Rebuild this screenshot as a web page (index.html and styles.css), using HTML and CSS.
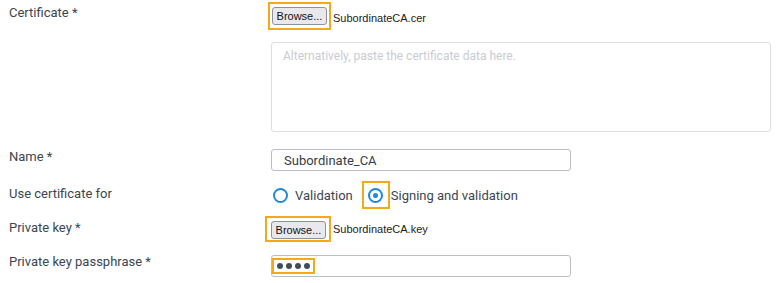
FILE: index.html
```html
<!DOCTYPE html>
<html>
  <head>
    <meta charset="UTF-8" />
    <title>Add certificate</title>
    <link rel="stylesheet" href="styles.css">
  </head>
  <body>
    <div class="form">
      <!-- Certificate upload -->
      <div class="row row-cert">
        <div class="label">Certificate *</div>
        <div class="control">
          <div class="file">
            <span class="hl hl-first"><span class="browse">Browse...</span></span>
            <span class="file-name">SubordinateCA.cer</span>
          </div>
          <div class="textarea">Alternatively, paste the certificate data here.</div>
        </div>
      </div>

      <div class="row row-name">
        <div class="label">Name *</div>
        <div class="control">
          <div class="input">Subordinate_CA</div>
        </div>
      </div>

      <div class="row row-use">
        <div class="label">Use certificate for</div>
        <div class="control radios">
          <span class="radio"></span>
          <span class="radio-text">Validation</span>
          <span class="hl hl-radio"><span class="radio checked"></span></span>
          <span class="radio-text">Signing and validation</span>
        </div>
      </div>

      <div class="row row-key">
        <div class="label">Private key *</div>
        <div class="control">
          <div class="file">
            <span class="hl hl-second"><span class="browse">Browse...</span></span>
            <span class="file-name">SubordinateCA.key</span>
          </div>
        </div>
      </div>

      <div class="row row-pass">
        <div class="label">Private key passphrase *</div>
        <div class="control">
          <div class="input">
            <span class="hl hl-mask">
              <span class="dot"></span><span class="dot"></span><span class="dot"></span><span class="dot"></span>
            </span>
          </div>
        </div>
      </div>
    </div>
  </body>
</html>
```

FILE: styles.css
```css
body {
  margin: 0;
  padding: 0;
  background-color: #fff;
  font-family: Roboto, 'Noto Sans', sans-serif;
  font-size: 13px;
  color: #3b4651;
}

.form {
  display: flex;
  flex-direction: column;
}

.row {
  display: flex;
  align-items: flex-start;
}

.label {
  width: 271px;
  flex-shrink: 0;
  box-sizing: border-box;
  padding-left: 9px;
  line-height: 16px;
}

.control {
  display: flex;
  flex-direction: column;
}

/* Certificate */
.row-cert {
  padding-top: 5px;
}

.file {
  display: flex;
  align-items: center;
}

.browse {
  display: block;
  box-sizing: border-box;
  width: 55px;
  height: 18px;
  line-height: 16px;
  text-align: center;
  font-family: 'Liberation Sans', Arial, sans-serif;
  font-size: 11px;
  color: #111;
  background-color: #e9e9ed;
  border: 1px solid #8f8f9d;
  border-radius: 3px;
}

.file-name {
  margin-left: 2px;
  font-family: 'Liberation Sans', Arial, sans-serif;
  font-size: 11px;
  color: #222;
}

/* Orange highlight marks */
.hl {
  display: inline-flex;
  align-items: center;
  border: 2px solid #f4a81c;
}

.hl-first {
  margin-top: -3px;
  margin-left: -3px;
  padding: 3px 2px;
}

.hl-second {
  margin-left: -6px;
  padding: 3px 3px 1px 4px;
}

.textarea {
  box-sizing: border-box;
  margin-top: 12px;
  width: 500px;
  height: 90px;
  padding: 5px 11px;
  border: 1px solid #dcdfe2;
  border-radius: 3px;
  font-size: 12px;
  line-height: 16px;
  color: #c9cdd1;
}

/* Text inputs */
.row-name {
  margin-top: 17px;
}

.input {
  box-sizing: border-box;
  width: 300px;
  height: 22px;
  padding: 0 12px;
  display: flex;
  align-items: center;
  border: 1px solid #b9bec4;
  border-radius: 3px;
  color: #343e48;
}

/* Radios */
.row-use {
  margin-top: 10px;
}

.row-use .label {
  padding-top: 5px;
}

.radios {
  flex-direction: row;
  align-items: center;
  height: 28px;
}

.radio {
  display: block;
  box-sizing: border-box;
  width: 15px;
  height: 15px;
  margin-left: 2px;
  border: 2px solid #1d8ad5;
  border-radius: 50%;
}

.radio.checked {
  margin-left: 0;
  display: flex;
  align-items: center;
  justify-content: center;
}

.radio.checked::after {
  content: '';
  width: 5px;
  height: 5px;
  border-radius: 50%;
  background-color: #1d8ad5;
}

.radio-text {
  margin-left: 7px;
}

.hl-radio {
  box-sizing: border-box;
  width: 28px;
  height: 28px;
  justify-content: center;
  margin-left: 9px;
}

.hl-radio + .radio-text {
  margin-left: 1px;
}

/* Private key */
.row-key {
  margin-top: 7px;
}

.row-key .label {
  padding-top: 4px;
}

/* Passphrase */
.row-pass {
  margin-top: 13px;
}

.row-pass .label {
  margin-top: -1px;
}

.row-pass .input {
  padding-left: 0;
}

.hl-mask {
  gap: 3px;
  padding: 3px 3px;
}

.dot {
  display: block;
  width: 6px;
  height: 6px;
  border-radius: 50%;
  background-color: #3f4e5c;
}
```
